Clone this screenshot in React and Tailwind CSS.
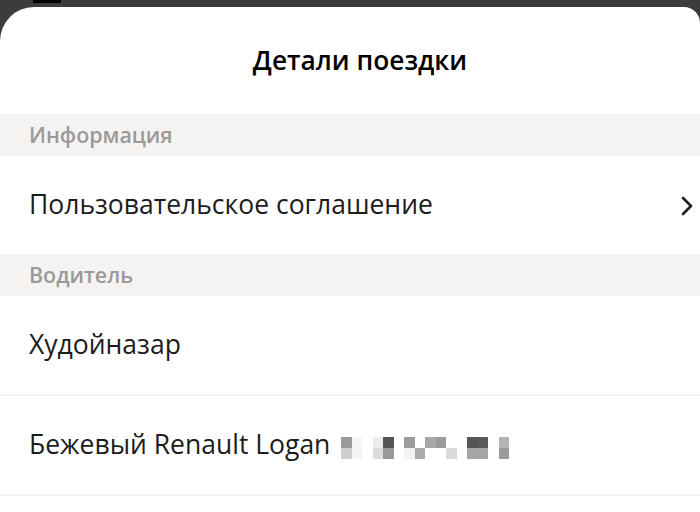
const plate = [
  ['#9a9a9a', '#f5f5f5', null, '#ececec', '#555555', null, '#9d9d9d', null, '#a8a8a8', '#9a9a9a', null, null, '#555555', '#5a5a5a', null, '#b5b5b5'],
  ['#cfcfcf', '#f4f4f4', null, '#dcdcdc', '#999999', null, '#f2f2f2', '#aaaaaa', null, null, '#dadada', null, '#a5a5a5', '#a5a5a5', null, '#9a9a9a'],
];

const SectionHeader = ({ children }) => (
  <div className="h-[42px] bg-[#f4f3f1] flex items-center px-[29px]">
    <span className="text-[21.4px] font-semibold text-[#9b9a98]">{children}</span>
  </div>
);

const Row = ({ children, chevron, border }) => (
  <div className={`flex items-center pl-[29px] pr-[7px] ${border ? 'h-[100px] border-b-2 border-[#f2f2f2]' : 'h-[98px]'}`}>
    <div className="flex-1 flex items-center text-[26.5px] text-[#1c1c1c]">{children}</div>
    {chevron && (
      <svg width="12" height="20" viewBox="0 0 12 20" fill="none" className="mt-[2px]">
        <path d="M2 2 L10 10 L2 18" stroke="#1f1f1f" strokeWidth="2.6" strokeLinecap="round" strokeLinejoin="round" />
      </svg>
    )}
  </div>
);

const Plate = () => (
  <div className="ml-[11px] mt-[6px] flex flex-col">
    {plate.map((line, i) => (
      <div key={i} className="flex">
        {line.map((c, j) => (
          <div key={j} className="w-[10.5px] h-[11px]" style={{ backgroundColor: c || 'transparent' }} />
        ))}
      </div>
    ))}
  </div>
);

export default function App() {
  return (
    <div className="w-[700px] h-[512px] bg-[#3c3c3a] overflow-hidden relative" style={{ fontFamily: '"Open Sans", "Noto Sans", sans-serif' }}>
      <div className="absolute left-[33px] top-0 w-[28px] h-[3px] bg-black" />
      <div className="mt-[7px] h-[505px] bg-white rounded-tl-[34px] rounded-tr-[16px] overflow-hidden">
        <div className="h-[107px] flex items-center justify-center pl-[20px]">
          <h1 className="text-[26.3px] font-semibold text-black">Детали поездки</h1>
        </div>
        <SectionHeader>Информация</SectionHeader>
        <Row chevron>Пользовательское соглашение</Row>
        <SectionHeader>Водитель</SectionHeader>
        <Row border>Худойназар</Row>
        <Row border>
          Бежевый Renault Logan
          <Plate />
        </Row>
      </div>
    </div>
  );
}
